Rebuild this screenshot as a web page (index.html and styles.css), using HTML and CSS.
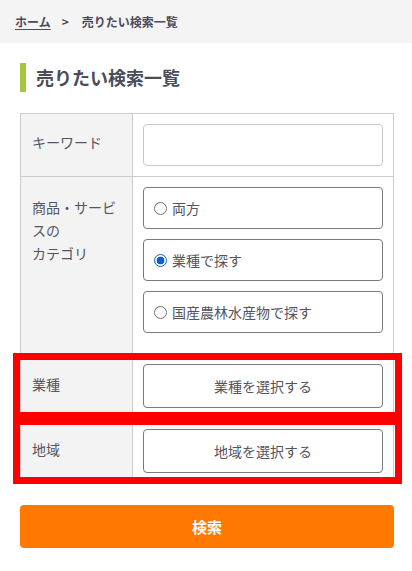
FILE: index.html
```html
<!DOCTYPE html>
<html lang="ja">
<head>
<meta charset="utf-8">
<title>売りたい検索一覧</title>
<link rel="stylesheet" href="styles.css">
</head>
<body>
<nav class="crumbs">
  <a class="crumb-link" href="#">ホーム</a>
  <span class="crumb-sep">&gt;</span>
  <span class="crumb-current">売りたい検索一覧</span>
</nav>
<main class="page">
  <h1 class="title">売りたい検索一覧</h1>
  <div class="form">
    <div class="row">
      <div class="label label-short">キーワード</div>
      <div class="value">
        <div class="text-input"></div>
      </div>
    </div>
    <div class="row">
      <div class="label">商品・サービ<br>スの<br>カテゴリ</div>
      <div class="value stack">
        <div class="choice"><span class="radio"></span><span>両方</span></div>
        <div class="choice"><span class="radio checked"></span><span>業種で探す</span></div>
        <div class="choice"><span class="radio"></span><span>国産農林水産物で探す</span></div>
      </div>
    </div>
    <div class="row marked">
      <div class="label">業種</div>
      <div class="value">
        <div class="select-btn">業種を選択する</div>
      </div>
    </div>
    <div class="row marked">
      <div class="label">地域</div>
      <div class="value">
        <div class="select-btn">地域を選択する</div>
      </div>
    </div>
  </div>
  <div class="search-btn">検索</div>
</main>
</body>
</html>
```
FILE: styles.css
```css
* { box-sizing: border-box; }
html, body { margin: 0; padding: 0; }
body {
  font-family: "Noto Sans CJK JP", "Noto Sans", sans-serif;
  color: #4b4b59;
  background: #fff;
  width: 412px;
}
.crumbs {
  height: 43px;
  background: #f4f4f4;
  display: flex;
  align-items: center;
  padding: 0 15px;
  font-size: 12px;
  font-weight: bold;
  color: #4b4b59;
}
.crumb-link {
  color: #4b4b59;
  text-decoration: underline;
  text-underline-offset: 2px;
}
.crumb-sep { margin: 0 13px 0 11px; }
.page { padding: 20px 18px 0 20px; }
.title {
  margin: 0;
  border-left: 6px solid #a3c83a;
  padding-left: 10px;
  font-size: 18px;
  font-weight: bold;
  line-height: 29px;
  height: 29px;
  color: #4b4b59;
}
.form {
  margin-top: 21px;
  border-left: 1px solid #cccccc;
  border-right: 1px solid #cccccc;
  border-bottom: 1px solid #cccccc;
}
.row {
  display: grid;
  grid-template-columns: 112px 1fr;
  border-top: 1px solid #cccccc;
  position: relative;
}
.label {
  background: #f3f3f3;
  border-right: 1px solid #cccccc;
  padding: 19px 10px 10px 11px;
  font-size: 14px;
  line-height: 23px;
  color: #555560;
}
.label-short { padding-top: 17px; }
.value { padding: 10px 10px 10px 10px; }
.stack {
  display: flex;
  flex-direction: column;
  gap: 10px;
  padding-bottom: 20px;
}
.text-input {
  height: 42px;
  border: 1px solid #c8c8c8;
  border-radius: 4px;
  background: #fff;
}
.choice {
  height: 42px;
  border: 1px solid #7a7a80;
  border-radius: 4px;
  display: flex;
  align-items: center;
  padding-left: 10px;
  gap: 5px;
  font-size: 14px;
  color: #555560;
}
.radio {
  width: 13px;
  height: 13px;
  border: 1px solid #707070;
  border-radius: 50%;
  background: #fff;
  flex: none;
}
.radio.checked {
  border: 1px solid #0b5fd0;
  background: radial-gradient(circle, #0b5fd0 0 3.6px, #fff 4.2px);
}
.select-btn {
  height: 44px;
  border: 1px solid #7a7a80;
  border-radius: 4px;
  display: flex;
  align-items: center;
  justify-content: center;
  font-size: 14px;
  color: #555560;
}
.marked::after {
  content: "";
  position: absolute;
  top: -1px;
  bottom: -1px;
  left: -8px;
  right: -9px;
  border: 7px solid #ff0000;
  pointer-events: none;
}
.search-btn {
  margin-top: 21px;
  height: 43px;
  background: #ff7800;
  border-radius: 4px;
  display: flex;
  align-items: center;
  justify-content: center;
  color: #fff;
  font-size: 15px;
  font-weight: bold;
}
```
